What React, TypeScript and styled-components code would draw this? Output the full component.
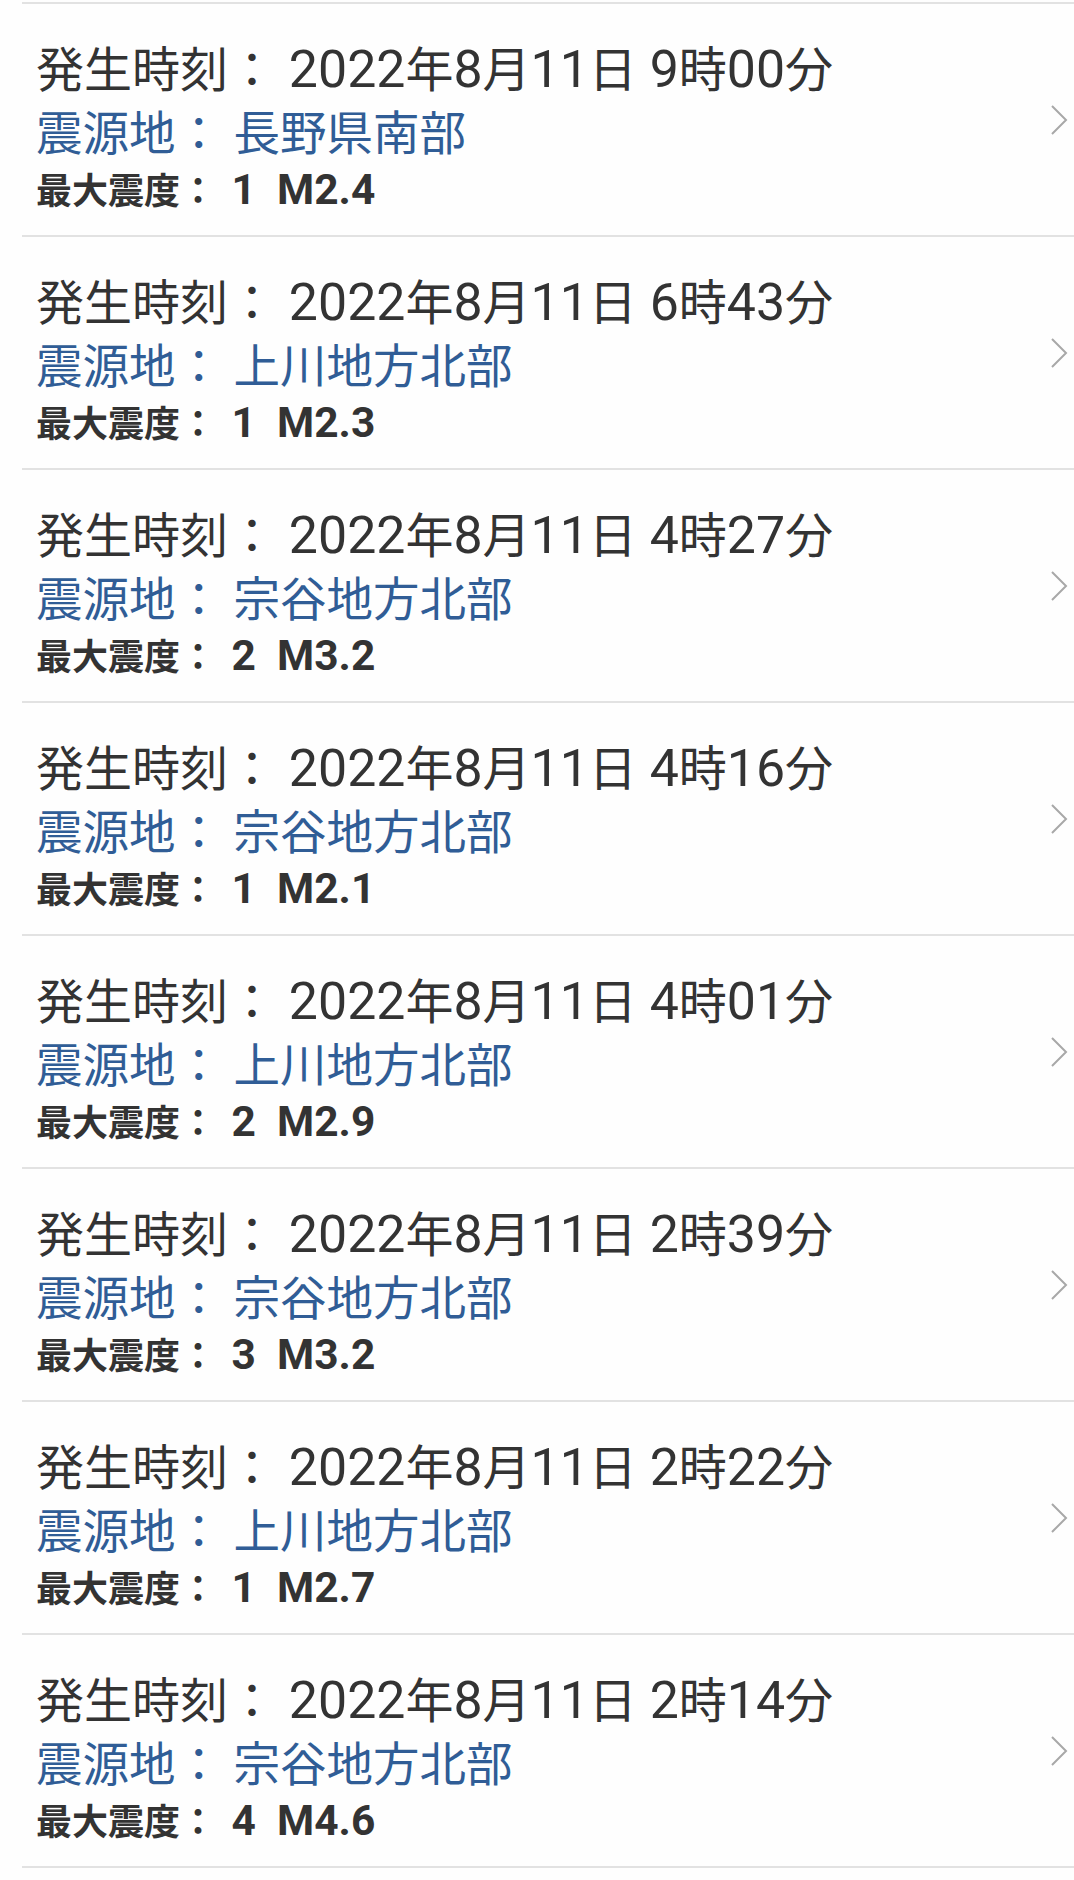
import React from 'react'
import styled, { createGlobalStyle } from 'styled-components'

interface IQuake {
  time: string
  place: string
  intensity: string
  magnitude: string
}

const quakes: IQuake[] = [
  { time: '2022年8月11日 9時00分', place: '長野県南部', intensity: '1', magnitude: 'M2.4' },
  { time: '2022年8月11日 6時43分', place: '上川地方北部', intensity: '1', magnitude: 'M2.3' },
  { time: '2022年8月11日 4時27分', place: '宗谷地方北部', intensity: '2', magnitude: 'M3.2' },
  { time: '2022年8月11日 4時16分', place: '宗谷地方北部', intensity: '1', magnitude: 'M2.1' },
  { time: '2022年8月11日 4時01分', place: '上川地方北部', intensity: '2', magnitude: 'M2.9' },
  { time: '2022年8月11日 2時39分', place: '宗谷地方北部', intensity: '3', magnitude: 'M3.2' },
  { time: '2022年8月11日 2時22分', place: '上川地方北部', intensity: '1', magnitude: 'M2.7' },
  { time: '2022年8月11日 2時14分', place: '宗谷地方北部', intensity: '4', magnitude: 'M4.6' }
]

const GlobalStyle = createGlobalStyle`
  html, body {
    margin: 0;
    padding: 0;
    background: #fefefe;
  }
  body {
    font-family: Roboto, "Noto Sans CJK JP", sans-serif;
  }
`

// latin runs (digits, M, dots) are drawn a bit larger than the kanji
const withLatin = (text: string, scale: number) =>
  text.split(/([0-9A-Za-z.\u00a0 ]+)/).map((part, i) =>
    /[0-9A-Za-z]/.test(part) ? (
      <Latin key={i} scale={scale}>
        {part}
      </Latin>
    ) : (
      part
    )
  )

const Chevron = () => (
  <svg width="20" height="32" viewBox="0 0 20 32" fill="none">
    <path d="M3 2 L17 16 L3 30" stroke="#a8a8a8" strokeWidth="2" />
  </svg>
)

const App = () => (
  <>
    <GlobalStyle />
    <QuakeList>
      {quakes.map((quake, index) => (
        <QuakeRow key={index}>
          <QuakeInfo>
            <TimeLine>発生時刻：{withLatin(' ' + quake.time, 1.08)}</TimeLine>
            <PlaceLine>震源地： {quake.place}</PlaceLine>
            <ScaleLine>
              最大震度：
              <Intensity scale={1.18}>
                {' ' + quake.intensity + '\u00a0\u00a0' + quake.magnitude}
              </Intensity>
            </ScaleLine>
          </QuakeInfo>
          <ChevronBox>
            <Chevron />
          </ChevronBox>
        </QuakeRow>
      ))}
    </QuakeList>
  </>
)

const QuakeList = styled.div`
  margin-left: 22px;
  padding-top: 2px;
`

const QuakeRow = styled.div`
  display: flex;
  align-items: center;
  height: 231px;
  border-top: 2px solid #e2e2e2;
  &:last-child {
    border-bottom: 2px solid #e2e2e2;
  }
`

const QuakeInfo = styled.div`
  flex: 1;
  display: flex;
  flex-direction: column;
  align-self: flex-start;
  padding-top: 35px;
  padding-left: 14px;
`

const Line = styled.div`
  white-space: nowrap;
  overflow: visible;
`

const TimeLine = styled(Line)`
  height: 64px;
  font-size: 48px;
  line-height: 64px;
  color: #333333;
`

const PlaceLine = styled(Line)`
  height: 62px;
  font-size: 46.5px;
  line-height: 62px;
  color: #305d96;
`

const ScaleLine = styled(Line)`
  height: 54px;
  font-size: 36px;
  line-height: 54px;
  font-weight: 700;
  color: #333333;
`

const Latin = styled.span<{ scale: number }>`
  font-size: ${props => props.scale}em;
  line-height: 0;
`

const Intensity = styled(Latin)`
  margin-left: 5px;
`

const ChevronBox = styled.div`
  display: flex;
  align-items: center;
  padding-right: 5px;
`

export default App
